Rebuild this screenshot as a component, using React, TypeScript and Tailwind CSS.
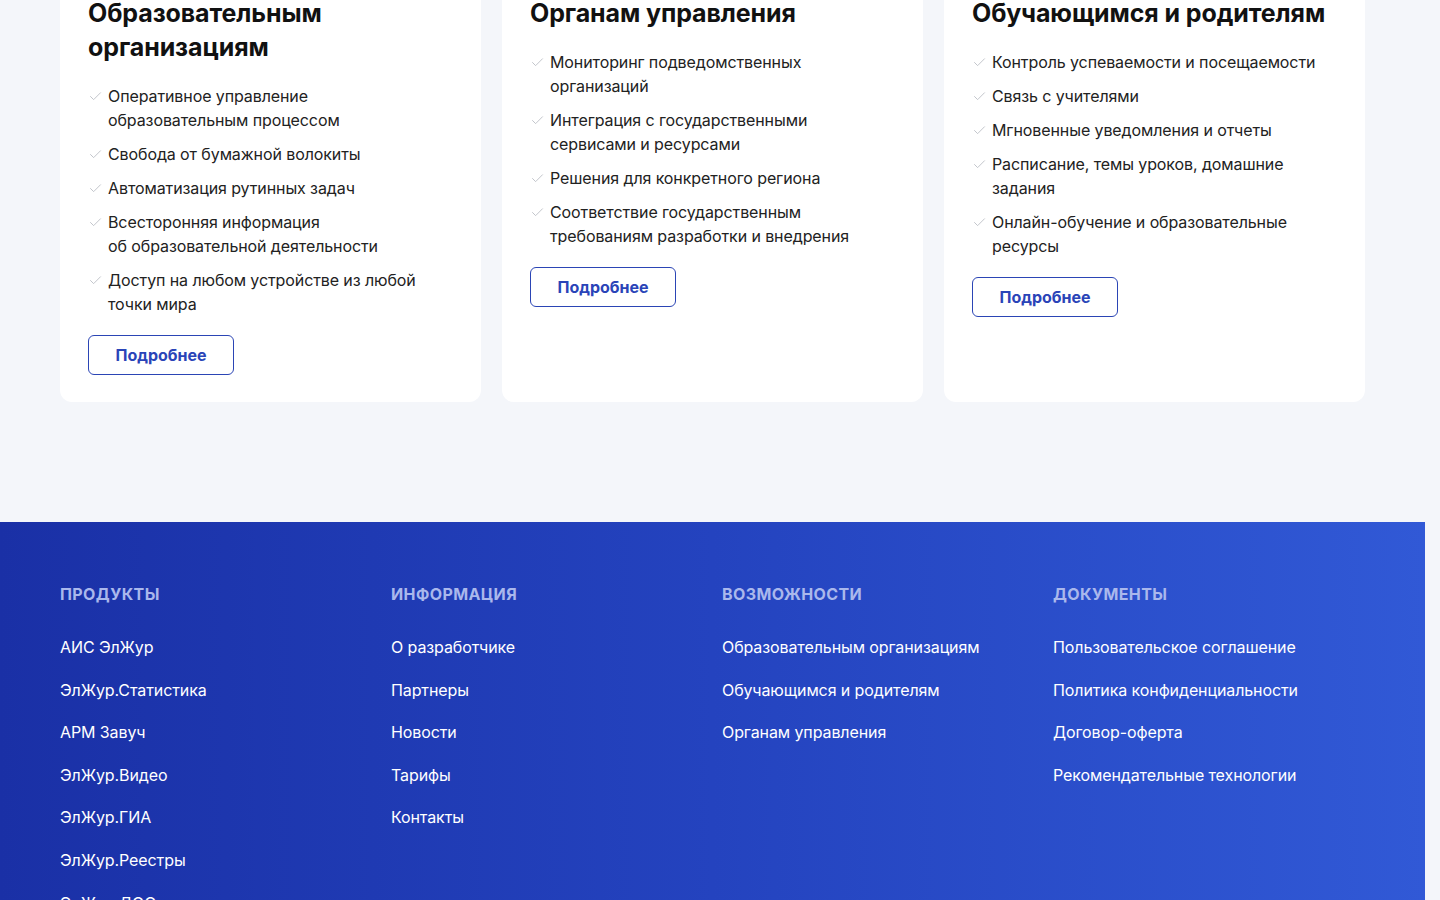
import { Check } from 'lucide-react';

const cards = [
  {
    title: ['Образовательным', 'организациям'],
    items: [
      'Оперативное управление образовательным процессом',
      'Свобода от бумажной волокиты',
      'Автоматизация рутинных задач',
      'Всесторонняя информация об\u00a0образовательной деятельности',
      'Доступ на любом устройстве из любой точки мира',
    ],
  },
  {
    title: ['Органам управления'],
    items: [
      'Мониторинг подведомственных организаций',
      'Интеграция с государственными сервисами и ресурсами',
      'Решения для конкретного региона',
      'Соответствие государственным требованиям разработки и внедрения',
    ],
  },
  {
    title: ['Обучающимся и родителям'],
    items: [
      'Контроль успеваемости и посещаемости',
      'Связь с учителями',
      'Мгновенные уведомления и отчеты',
      'Расписание, темы уроков, домашние задания',
      'Онлайн-обучение и образовательные ресурсы',
    ],
  },
];

const footer = [
  {
    title: 'Продукты',
    links: [
      'АИС ЭлЖур',
      'ЭлЖур.Статистика',
      'АРМ Завуч',
      'ЭлЖур.Видео',
      'ЭлЖур.ГИА',
      'ЭлЖур.Реестры',
      'ЭлЖур.ДОО',
      'ЭлЖур.Библиотека',
    ],
  },
  {
    title: 'Информация',
    links: ['О разработчике', 'Партнеры', 'Новости', 'Тарифы', 'Контакты'],
  },
  {
    title: 'Возможности',
    links: ['Образовательным организациям', 'Обучающимся и родителям', 'Органам управления'],
  },
  {
    title: 'Документы',
    links: [
      'Пользовательское соглашение',
      'Политика конфиденциальности',
      'Договор-оферта',
      'Рекомендательные технологии',
    ],
  },
];

export default function App() {
  return (
    <div
      className="h-[900px] overflow-hidden bg-[#f4f6fa]"
      style={{ fontFamily: 'Inter, "Noto Sans", sans-serif' }}
    >
      <div className="w-[1425px]">
        {/* карточки */}
        <section className="px-[60px] pb-[120px] -mt-[32px]">
          <div className="grid grid-cols-3 gap-[21px] w-[1305px]">
            {cards.map((card) => (
              <div key={card.title[0]} className="bg-white rounded-xl px-[28px] pt-[28px] pb-[27px]">
                <h3 className="text-[25px] leading-[34px] font-bold text-[#111] tracking-[-0.1px]">
                  {card.title.map((t) => (
                    <span key={t} className="block">
                      {t}
                    </span>
                  ))}
                </h3>
                <ul className="mt-[20px] flex flex-col gap-[10px]">
                  {card.items.map((item) => (
                    <li key={item} className="flex items-start">
                      <Check
                        className="w-[15px] h-[15px] mt-[5px] mr-[5px] shrink-0 text-[#b9bdc4]"
                        strokeWidth={1.4}
                      />
                      <span className="text-[16px] leading-[24px] text-[#222] max-w-[330px] tracking-[-0.1px]">
                        {item}
                      </span>
                    </li>
                  ))}
                </ul>
                <button className="mt-[19px] w-[146px] h-[40px] rounded-md border border-[#2b45b5] text-[#2a44b8] text-[16px] font-bold">
                  Подробнее
                </button>
              </div>
            ))}
          </div>
        </section>

        {/* подвал */}
        <footer className="bg-gradient-to-r from-[#1a30a6] via-[#2443bf] to-[#3159d6] pt-[62px] pl-[60px] pb-[60px]">
          <div className="grid grid-cols-[331px_331px_331px_331px]">
            {footer.map((col) => (
              <div key={col.title}>
                <h4 className="text-[16px] leading-[20px] font-bold uppercase tracking-[0.4px] text-[#aab8ec]">
                  {col.title}
                </h4>
                <ul className="mt-[31px] flex flex-col gap-[18px]">
                  {col.links.map((l) => (
                    <li key={l} className="text-[16px] leading-[24.6px] text-white tracking-[-0.1px]">
                      {l}
                    </li>
                  ))}
                </ul>
              </div>
            ))}
          </div>
        </footer>
      </div>
    </div>
  );
}
